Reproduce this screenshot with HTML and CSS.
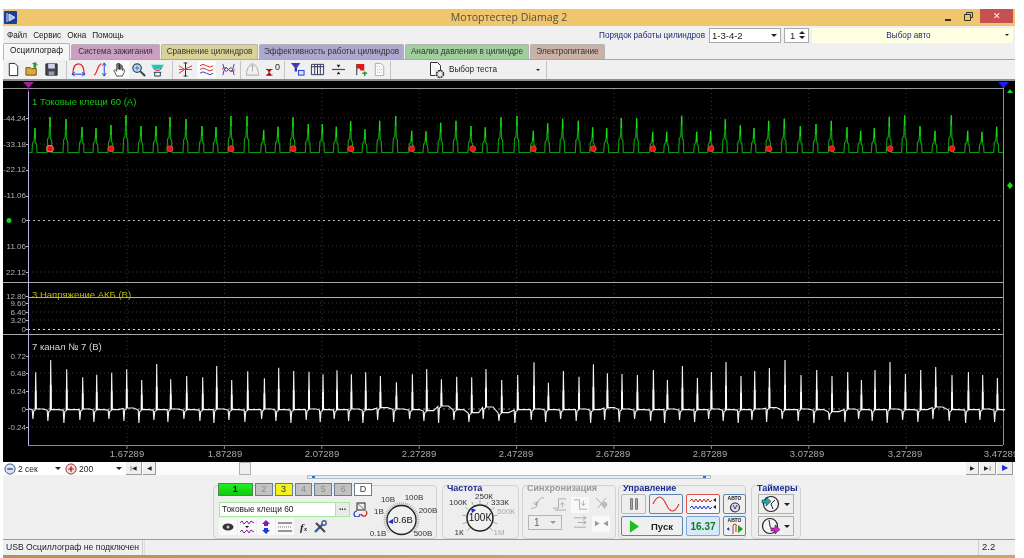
FILE: index.html
```html
<!DOCTYPE html>
<html lang="ru">
<head>
    <meta charset="UTF-8">
    <meta name="viewport" content="width=device-width, initial-scale=1.0">
    <title>Мотортестер Diamag 2</title>
    <link rel="stylesheet" href="styles.css">
</head>
<body>
<div class="window">
    <!-- Title bar -->
    <div class="titlebar">
        <svg class="app-icon" viewBox="0 0 13 13"><rect width="13" height="13" rx="1" fill="#1c3f96"/><path d="M3 2v9M5 3l6 3.5L5 10z" stroke="#dfe9ff" fill="#9cc0f5"/></svg>
        <div class="title">Мотортестер Diamag 2</div>
        <div class="win-min"></div>
        <svg class="win-restore" viewBox="0 0 9 9"><path d="M2.5 2.5V.5h6v5h-2M.5 2.5h6v6h-6z" fill="none" stroke="#333" stroke-width="1"/></svg>
        <div class="win-close">✕</div>
    </div>

    <!-- Menu with cylinder order -->
    <div class="menubar">
        <span class="menu-item">Файл</span>
        <span class="menu-item">Сервис</span>
        <span class="menu-item">Окна</span>
        <span class="menu-item">Помощь</span>
        <span class="order-label">Порядок работы цилиндров</span>
        <div class="select order-select"><span>1-3-4-2</span><i class="arrow"></i></div>
        <div class="select spin-select"><span>1</span><b class="spin"><i class="arrow up"></i><i class="arrow"></i></b></div>
        <div class="auto-select"><span>Выбор авто</span><i class="arrow small"></i></div>
    </div>

    <!-- Tabs -->
    <div class="tabs">
        <div class="tab tab-active">Осциллограф</div>
        <div class="tab tab-ignition">Система зажигания</div>
        <div class="tab tab-compare">Сравнение цилиндров</div>
        <div class="tab tab-power">Эффективность работы цилиндров</div>
        <div class="tab tab-pressure">Анализ давления в цилиндре</div>
        <div class="tab tab-supply">Электропитание</div>
    </div>

    <!-- Toolbar -->
    <div class="toolbar">
        <svg class="tool" viewBox="0 0 16 16"><path d="M3.5 1.5h6l3 3v10h-9z" fill="#fff" stroke="#222"/></svg>
        <svg class="tool" viewBox="0 0 16 16"><path d="M1 6h5l1 1h5v7H1z" fill="#d9a93a" stroke="#6b5210"/><path d="M9 6V2l-2 0 3.5-2L14 3h-2v3z" fill="#2e9a2e"/></svg>
        <svg class="tool" viewBox="0 0 16 16"><path d="M2 2h12v12H2z" fill="#445" stroke="#223"/><path d="M4.5 2h7v5h-7z" fill="#cfd6e8"/><path d="M5 10h6v4H5z" fill="#99a"/></svg>
        <i class="tool-sep sep-a"></i>
        <svg class="tool gap3" viewBox="0 0 16 16"><path d="M2 13C2 5 5 2 8 2s6 3 6 11" fill="none" stroke="#e02020" stroke-width="1.3"/><path d="M1 13h14M1 13l3-2M1 13l3 2M15 13l-3-2M15 13l-3 2" stroke="#1a3fd0" fill="none"/></svg>
        <svg class="tool" viewBox="0 0 16 16"><path d="M1 14C4 14 5 2 9 2" fill="none" stroke="#e02020" stroke-width="1.3"/><path d="M12 1v14M12 1l-2 3M12 1l2 3M12 15l-2-3M12 15l2-3" stroke="#1a3fd0" fill="none"/></svg>
        <div class="tool-on"><svg class="tool" viewBox="0 0 16 16"><path d="M5 15L2 9l1-1 2 2V2h1.5v6V1.5H8V8 2.5h1.5V8 4H11v5l1-2 1 1v3l-2 4z" fill="#fff" stroke="#222" stroke-width=".8"/></svg></div>
        <svg class="tool" viewBox="0 0 16 16"><circle cx="6.5" cy="6.5" r="4.5" fill="#bfe0f5" stroke="#345" stroke-width="1.3"/><path d="M10 10l5 5" stroke="#345" stroke-width="2.2"/><path d="M4 6.5h5M6.5 4v5" stroke="#2a6fc0"/></svg>
        <svg class="tool" viewBox="0 0 16 16"><path d="M1 3h14L11 8H5z" fill="#1fc9b5"/><path d="M3 6l3 3h4l3-3" fill="none" stroke="#d03030"/><path d="M4 11h8M5 15h6M5 11v4M11 11v4" stroke="#235" fill="none"/></svg>
        <i class="tool-sep sep-b"></i>
        <svg class="tool gap2" viewBox="0 0 16 16"><path d="M1 4l6 4 8 0M1 12l6-4 8-4" fill="none" stroke="#d03030"/><path d="M8 1v14M6 1h4M6 15h4" stroke="#222"/><path d="M1 8h14" stroke="#2a9a2a"/></svg>
        <div class="tool-on gap1"><svg class="tool" viewBox="0 0 16 16"><path d="M1 4q3-3 7 0t7 0M1 8q3-3 7 0t7 0" fill="none" stroke="#e02020"/><path d="M1 12q3-3 7 0t7 0" fill="none" stroke="#2040d0"/></svg></div>
        <svg class="tool" viewBox="0 0 16 16"><path d="M2 2q2 12 6 6t6 6M2 14q2-12 6-6t6-6" fill="none" stroke="#2040d0"/><path d="M1 8q3-4 7 0t7 0" fill="none" stroke="#e02020"/></svg>
        <i class="tool-sep sep-c"></i>
        <svg class="tool tool-dim gap1" viewBox="0 0 16 16"><path d="M1.5 14C2 6 5 2 8 2s6 4 6.5 12z" fill="none" stroke="#999"/><path d="M8 3v7M6 5l2-2 2 2" stroke="#999" fill="none"/></svg>
        <svg class="tool" viewBox="0 0 16 16"><path d="M1 8h7M1 14h7M2.5 8l2 3 2-3zM2.5 14l2-3 2 3z" fill="#b01818" stroke="#b01818"/></svg><span class="zero-mark">0</span>
        <i class="tool-sep sep-d"></i>
        <svg class="tool gap1" viewBox="0 0 16 16"><path d="M1 1h10L7.5 6v4H5V6z" fill="#1a3fd0"/><path d="M3 1l3 5 3-5" fill="none" stroke="#e02020"/><rect x="9" y="9" width="6" height="5" fill="#cfe0fa" stroke="#1a3fd0"/></svg>
        <svg class="tool gap2" viewBox="0 0 16 16"><path d="M1.5 2.5h13v11h-13zM1.5 5h13M5 2.5v11M8 2.5v11M11 2.5v11" fill="none" stroke="#30305a"/></svg>
        <svg class="tool gap3" viewBox="0 0 16 16"><path d="M1 8h14" stroke="#7a1fa0" stroke-width="1.3"/><path d="M6 3h4l-2 3zM6 13h4l-2-3z" fill="#222"/></svg>
        <svg class="tool" viewBox="0 0 16 16"><path d="M4 2v12" stroke="#222"/><path d="M4 2h8v7H8l-1-2H4z" fill="#e01818"/><path d="M10 12h5M12.5 10v5" stroke="#1a9a2a" stroke-width="1.4"/></svg>
        <svg class="tool" viewBox="0 0 16 16"><path d="M3.5 1.5h6l3 3v10h-9z" fill="#fafafa" stroke="#aaa"/><path d="M5.5 5h3M5.5 8h5M5.5 11h5" stroke="#bbb" stroke-dasharray="1 1"/></svg>
        <i class="tool-sep sep-e"></i>
        <div class="test-select">
            <svg class="tool-big" viewBox="0 0 18 18"><path d="M2.5 1.5h7l3 3v7M2.5 1.5v13h5" fill="#fff" stroke="#333"/><circle cx="12" cy="13" r="3.5" fill="#ddd" stroke="#333" stroke-width="1.5" stroke-dasharray="2 .8"/><circle cx="12" cy="13" r="1" fill="#fff"/></svg>
            <span>Выбор теста</span>
            <i class="arrow small"></i>
        </div>
        <i class="tool-sep sep-f"></i>
    </div>

    <!-- Oscilloscope -->
    <svg class="scope" id="scope" viewBox="3 81 1012 381">
        <g id="grid"></g>
        <g class="scale">
            <text x="26" y="121">-44.24</text>
            <text x="26" y="147">-33.18</text>
            <text x="26" y="172">-22.12</text>
            <text x="26" y="198">-11.06</text>
            <text x="26" y="223">0</text>
            <text x="26" y="249">11.06</text>
            <text x="26" y="275">22.12</text>
            <text x="26" y="299">12.80</text>
            <text x="26" y="306">9.60</text>
            <text x="26" y="315">6.40</text>
            <text x="26" y="323">3.20</text>
            <text x="26" y="332">0</text>
            <text x="26" y="359">0.72</text>
            <text x="26" y="376">0.48</text>
            <text x="26" y="394">0.24</text>
            <text x="26" y="412">0</text>
            <text x="26" y="430">-0.24</text>
        </g>
        <g class="axis">
            <text x="127" y="457">1.67289</text>
            <text x="225" y="457">1.87289</text>
            <text x="322" y="457">2.07289</text>
            <text x="419" y="457">2.27289</text>
            <text x="516" y="457">2.47289</text>
            <text x="613" y="457">2.67289</text>
            <text x="710" y="457">2.87289</text>
            <text x="807" y="457">3.07289</text>
            <text x="905" y="457">3.27289</text>
            <text x="1001" y="457">3.47289</text>
        </g>
        <g id="traces"></g>
        <text class="ch ch-green" x="32" y="105">1 Токовые клещи 60 (А)</text>
        <text class="ch ch-yellow" x="32" y="298">3 Напряжение АКБ (В)</text>
        <text class="ch ch-white" x="32" y="350">7 канал № 7 (В)</text>
    </svg>

    <!-- Time controls -->
    <div class="timebar">
        <svg class="round-btn" viewBox="0 0 13 13"><circle cx="6.5" cy="6.5" r="5.5" fill="#d8e6f7" stroke="#2b4a80"/><path d="M3.5 6.5h6" stroke="#222" stroke-width="1.2"/></svg>
        <div class="time-select"><span>2 сек</span><i class="arrow"></i></div>
        <svg class="round-btn" viewBox="0 0 13 13"><circle cx="6.5" cy="6.5" r="5.5" fill="#f7dcdc" stroke="#80302b"/><path d="M3.5 6.5h6M6.5 3.5v6" stroke="#a01010" stroke-width="1.3"/></svg>
        <div class="time-select"><span>200</span><i class="arrow"></i></div>
        <div class="step-btn step-wide">|◀</div>
        <div class="step-btn">◀</div>
        <div class="track"><div class="thumb"></div></div>
        <div class="step-btn">▶</div>
        <div class="step-btn step-wide">▶|</div>
        <div class="step-btn step-wide step-blue">▶</div>
    </div>

    <!-- Bottom panels -->
    <div class="bottom">
        <div class="range"><i class="range-mark"></i><i class="range-mark range-end"></i></div>
        <div class="panels">
            <div class="panel panel-channels">
                <div class="ch-col">
                    <div class="ch-btns">
                        <div class="ch-btn ch-btn-first">1</div>
                        <div class="ch-btn">2</div>
                        <div class="ch-btn ch-btn-on">3</div>
                        <div class="ch-btn">4</div>
                        <div class="ch-btn">5</div>
                        <div class="ch-btn">6</div>
                        <div class="ch-btn ch-btn-d">D</div>
                    </div>
                    <div class="ch-input-row">
                        <div class="ch-input"><span>Токовые клещи 60</span><b>...</b></div>
                        <svg class="ch-input-icon" viewBox="0 0 15 15"><rect x="4" y="1" width="8" height="7" fill="#eee" stroke="#222"/><path d="M4 1l8 7" stroke="#777"/><path d="M4 9a3 3 0 1 0 3 3" fill="none" stroke="#1a3fd0" stroke-width="1.2"/><path d="M8 12a3 3 0 1 0 5-3" fill="none" stroke="#d01818" stroke-width="1.2"/></svg>
                    </div>
                    <div class="ch-tools">
                        <div class="ch-tool"><svg viewBox="0 0 14 14"><ellipse cx="7" cy="7" rx="5.5" ry="3.5" fill="#333"/><circle cx="7" cy="7" r="1.5" fill="#ccc"/></svg></div>
                        <div class="ch-tool"><svg viewBox="0 0 14 14"><path d="M0 3l2-2 2 3 3-3 2 3 2-3 3 2M0 12l2-2 2 3 3-3 2 3 2-3 3 2" fill="none" stroke="#8a1fa0"/><path d="M5 6h4l-2 2z" fill="#111"/></svg></div>
                        <div class="ch-tool"><svg viewBox="0 0 14 14"><path d="M7 0l4 4H9v2H5V4H3z" fill="#7a1fb0"/><path d="M7 14l4-4H9V8H5v2H3z" fill="#1a3fd0"/></svg></div>
                        <div class="ch-tool"><svg viewBox="0 0 14 14"><path d="M0 3h14M0 11h14" stroke="#333"/><path d="M0 7h14" stroke="#777" stroke-dasharray="1 1"/></svg></div>
                        <span class="fx">f<small>x</small></span>
                        <svg class="ch-tool-plain" viewBox="0 0 14 14"><path d="M2 12L10 4" stroke="#3a5f9a" stroke-width="2.4"/><path d="M3 3l9 9" stroke="#444" stroke-width="2"/><circle cx="11" cy="3" r="2.2" fill="none" stroke="#3a5f9a" stroke-width="1.4"/></svg>
                    </div>
                </div>
                <svg class="knob" viewBox="372 493 66 46">
                    <g id="knobTicksA"></g>
                    <circle cx="401.5" cy="520" r="14.5" fill="#f0f0f0" stroke="#222" stroke-width="1.3"/>
                    <path d="M388 522l5-3v5z" fill="#1a2fd0"/>
                    <text class="knob-main knob-small" x="403" y="523">0.6В</text>
                    <text x="388" y="502">10В</text>
                    <text x="414" y="500">100В</text>
                    <text x="379" y="514">1В</text>
                    <text x="428" y="513">200В</text>
                    <text x="378" y="536">0.1В</text>
                    <text x="423" y="536">500В</text>
                </svg>
            </div>

            <div class="panel panel-freq">
                <div class="panel-title">Частота</div>
                <svg class="knob" viewBox="442 495 76 44">
                    <g id="knobTicksB"></g>
                    <circle cx="479" cy="519" r="13" fill="#f0f0f0" stroke="#222" stroke-width="1.5"/>
                    <path d="M470 509l5 2-4 3z" fill="#1a2fd0"/>
                    <text class="knob-main" x="479" y="522">100К</text>
                    <text x="483" y="500">250К</text>
                    <text x="457" y="506">100К</text>
                    <text x="499" y="506">333К</text>
                    <text class="knob-off" x="505" y="515">500К</text>
                    <text x="458" y="536">1К</text>
                    <text class="knob-off" x="498" y="536">1М</text>
                </svg>
            </div>

            <div class="panel panel-sync">
                <div class="panel-title title-off">Синхронизация</div>
                <div class="sync-row">
                    <svg class="sync-icon" viewBox="0 0 16 16"><path d="M1 13h3q3 0 4-5t4-6h3M4 8l3-2v4z" fill="none" stroke="#aaa"/></svg>
                    <svg class="sync-icon" viewBox="0 0 16 16"><path d="M1 13h6V3h8M11 12V7M9 9l2-2 2 2M3 15h12" fill="none" stroke="#aaa"/></svg>
                    <div class="sync-on"><svg class="sync-icon" viewBox="0 0 16 16"><path d="M1 3h6v10h8M11 4v5M9 7l2 2 2-2" fill="none" stroke="#aaa"/></svg></div>
                    <svg class="sync-icon" viewBox="0 0 16 16"><path d="M1 2l6 6 4 6M3 13l6-8 3-3" fill="none" stroke="#aaa"/><circle cx="10" cy="9" r="3" fill="#bbb"/></svg>
                </div>
                <div class="sync-row">
                    <div class="sync-select"><span>1</span><i class="arrow off"></i></div>
                    <svg class="sync-icon" viewBox="0 0 16 16"><path d="M1 3h13M5 8h9M1 13h13M11 1l3 2-3 2M11 6l3 2-3 2" fill="none" stroke="#aaa"/></svg>
                    <div class="sync-on"><svg class="sync-icon" viewBox="0 0 16 16"><path d="M1 5l5 3-5 3zM15 5l-5 3 5 3z" fill="#999"/></svg></div>
                </div>
            </div>

            <div class="panel panel-control">
                <div class="panel-title">Управление</div>
                <div class="ctl-grid">
                    <div class="ctl ctl-pause"><i></i><i></i></div>
                    <div class="ctl ctl-blue"><svg viewBox="0 0 30 16"><path d="M2 8q6.5-14 13 0t13 0" fill="none" stroke="#d84040" stroke-width="1.2"/></svg></div>
                    <div class="ctl ctl-red"><svg viewBox="0 0 30 16"><path d="M2 5l2-2 2 3 2-3 2 3 2-3 2 3 2-3 2 3 2-3 2 3 2-2" fill="none" stroke="#d82020"/><path d="M2 12l2-2 2 3 2-3 2 3 2-3 2 3 2-3 2 3 2-3 2 3 2-2" fill="none" stroke="#2030d0"/><path d="M28 2l-3 2 3 2zM28 9l-3 2 3 2z" fill="#223"/></svg></div>
                    <div class="ctl ctl-blue ctl-auto"><span>АВТО</span><svg viewBox="0 0 12 12"><circle cx="6" cy="6.5" r="4.5" fill="#ddd" stroke="#333" stroke-width="1.2"/><path d="M4 4l2 4 2-4" fill="none" stroke="#1a3fd0"/></svg></div>
                    <div class="ctl ctl-blue ctl-start"><svg viewBox="0 0 11 14"><path d="M1 0l10 7-10 7z" fill="#18c018"/></svg><b>Пуск</b></div>
                    <div class="ctl ctl-time">16.37</div>
                    <div class="ctl ctl-blue ctl-auto"><span>АВТО</span><svg viewBox="0 0 18 12"><path d="M1 6h3M7 11V3q0-2 2-2t1 3v5" fill="none" stroke="#c03030"/><path d="M1 6l2-2v4z" fill="#1a3fd0"/><path d="M12 2l5 4-5 4z" fill="#18a018"/></svg></div>
                </div>
            </div>

            <div class="panel panel-timers">
                <div class="panel-title">Таймеры</div>
                <div class="timer-btn"><svg viewBox="0 0 20 18"><circle cx="10" cy="9" r="7.5" fill="#f4f4f4" stroke="#222" stroke-width="1.2"/><path d="M10 9l4-4M10 9l2 5" stroke="#222"/><path d="M1 5h4V2l5 4.5L5 11V8H1z" fill="#28a89a" stroke="#115" stroke-width=".5"/></svg><i class="arrow"></i></div>
                <div class="timer-btn"><svg viewBox="0 0 20 18"><circle cx="9" cy="9" r="7.5" fill="#f4f4f4" stroke="#222" stroke-width="1.2"/><path d="M9 9l-1-6M9 9l2 4" stroke="#222"/><path d="M10 11h4V8l5 4.5L14 17v-3h-4z" fill="#e020c0" stroke="#115" stroke-width=".5"/></svg><i class="arrow"></i></div>
            </div>
        </div>
    </div>

    <!-- Status bar -->
    <div class="statusbar">
        <div class="status-main">USB Осциллограф не подключен</div>
        <div class="status-fill"></div>
        <div class="status-ver">2.2</div>
    </div>
</div>
<div class="desktop-strip"></div>
<script src="script.js"></script>
</body>
</html>
```

FILE: styles.css
```css
body {
    margin: 0;
    background: #fff;
    font-family: "Liberation Sans", Arial, sans-serif;
    font-size: 8.2px;
    color: #222;
    overflow: hidden;
    white-space: nowrap;
}
.window {
    margin: 9px 0 0 3px;
    width: 1012px;
    height: 546px;
    background: #f0f0f0;
    display: flex;
    flex-direction: column;
    filter: blur(0.35px);
}
.desktop-strip {
    margin-left: 3px;
    width: 1012px;
    height: 3px;
    background: linear-gradient(90deg, #b5914f, #c4a66a 55%, #c9a95e);
}
.arrow {
    display: inline-block;
    width: 0;
    height: 0;
    border-left: 3px solid transparent;
    border-right: 3px solid transparent;
    border-top: 3px solid #222;
}
.arrow.small { border-width: 2.5px 2.5px 0; }
.arrow.up { border-top: 0; border-bottom: 3px solid #222; }
.arrow.off { border-top-color: #999; }

/* title bar */
.titlebar {
    height: 17px;
    flex: none;
    background: #efc66c;
    display: flex;
    align-items: flex-start;
}
.app-icon { width: 13px; height: 13px; margin: 2px 0 0 1px; }
.title {
    flex: 1;
    text-align: center;
    font-family: "Open Sans", sans-serif;
    font-size: 10.6px;
    line-height: 17px;
    color: #55503f;
    padding-left: 56px;
}
.win-min { width: 6px; height: 2px; background: #333; margin: 10px 13px 0 0; }
.win-restore { width: 9px; height: 9px; margin: 3px 7px 0 0; }
.win-close {
    width: 33px;
    height: 14px;
    margin-right: 2px;
    background: #c75050;
    color: #fff;
    text-align: center;
    font-size: 9px;
    line-height: 14px;
}

/* menu */
.menubar {
    height: 18px;
    flex: none;
    display: flex;
    align-items: center;
    padding-left: 4px;
}
.menu-item { margin-right: 6px; }
.order-label { margin-left: auto; margin-right: 4px; color: #1f2a78; }
.select {
    height: 15px;
    box-sizing: border-box;
    background: #fff;
    border: 1px solid #a9a9a9;
    display: flex;
    align-items: center;
    justify-content: space-between;
    padding: 0 3px 0 2px;
    font-size: 9.5px;
}
.order-select { width: 72px; margin-right: 3px; }
.spin-select { width: 25px; margin-right: 3px; padding-left: 5px; }
.spin { display: flex; flex-direction: column; gap: 2px; }
.auto-select {
    width: 201px;
    height: 15px;
    margin-right: 2px;
    background: #ffffe3;
    border-radius: 2px;
    display: flex;
    align-items: center;
    padding-right: 4px;
    box-sizing: border-box;
    color: #1f2a78;
}
.auto-select span { flex: 1; text-align: center; }

/* tabs */
.tabs {
    height: 16px;
    flex: none;
    display: flex;
    border-bottom: 1px solid #a8a8a8;
    box-sizing: border-box;
    align-items: flex-end;
}
.tab {
    height: 15px;
    box-sizing: border-box;
    line-height: 14px;
    text-align: center;
    border: 1px solid #b5b5b5;
    border-bottom: 0;
    border-radius: 2px 2px 0 0;
    margin-right: 1px;
    color: #333;
}
.tab-active { width: 67px; height: 17px; background: #f6f6f6; margin-bottom: -1px; color: #111; margin-right: 1px; }
.tab-ignition { width: 89px; background: #cb9ec3; }
.tab-compare { width: 97px; background: #d8d296; }
.tab-power { width: 145px; background: #ada8cf; }
.tab-pressure { width: 124px; background: #a0cf9d; }
.tab-supply { width: 75px; background: #cbb1a6; }

/* toolbar */
.toolbar {
    height: 21px;
    flex: none;
    box-sizing: border-box;
    border-bottom: 2px solid #8f8f8f;
    display: flex;
    align-items: center;
    padding-left: 1px;
}
.tool { width: 15px; height: 15px; margin: 0 2px; flex: none; display: block; }
.tool.gap1, .tool-on.gap1 { margin-right: 3px; }
.tool.gap2 { margin-right: 4px; }
.tool.gap3 { margin-right: 5px; }
.tool-dim { opacity: .8; }
.tool-on { background: #fafafa; padding: 1px 0; }
.tool-sep { width: 1px; height: 18px; background: #c4c4c4; flex: none; }
.sep-a { margin: 0 2px 0 5px; }
.sep-b { margin: 0 3px 0 5px; }
.sep-c { margin: 0 2px 0 2px; }
.sep-d { margin: 0 3px 0 2px; }
.sep-e { margin: 0 0 0 1px; }
.zero-mark { font-size: 9px; margin: -5px 2px 0 -7px; }
.test-select {
    width: 155px;
    display: flex;
    align-items: center;
    padding-left: 37px;
    box-sizing: border-box;
}
.tool-big { width: 18px; height: 18px; margin-right: 3px; }
.test-select span { flex: 1; }
.test-select .arrow { margin-right: 6px; }

/* scope */
.scope {
    width: 1012px;
    height: 381px;
    flex: none;
    display: block;
    background: #000;
}
.scale text { font-size: 8px; fill: #b4b4b4; text-anchor: end; }
.axis text { font-size: 9.5px; fill: #a8a8a8; text-anchor: middle; }
.ch { font-size: 9.5px; }
.ch-green { fill: #12c812; }
.ch-yellow { fill: #b9b900; }
.ch-white { fill: #d8d8d8; }

/* time row */
.timebar {
    height: 13px;
    flex: none;
    display: flex;
    align-items: center;
    background: #fff;
    font-size: 8.5px;
}
.round-btn { width: 12px; height: 12px; margin-left: 1px; flex: none; }
.time-select {
    width: 47px;
    margin-left: 2px;
    display: flex;
    align-items: center;
    justify-content: space-between;
    padding-right: 4px;
    box-sizing: border-box;
}
.time-select + .round-btn { margin-left: 0; }
.step-btn {
    width: 13px;
    height: 13px;
    box-sizing: border-box;
    background: #efefef;
    border-right: 1px solid #999;
    border-bottom: 1px solid #999;
    text-align: center;
    font-size: 6px;
    line-height: 12px;
    color: #222;
    flex: none;
    margin-right: 1px;
}
.step-wide { width: 16px; }
.step-blue { color: #1a2fe0; font-size: 8px; margin-right: 2px; }
.track { flex: 1; height: 13px; background: #fbfbfb; margin-left: -1px; padding-left: 83px; }
.thumb {
    width: 12px;
    height: 13px;
    box-sizing: border-box;
    background: #eee;
    border: 1px solid #b0b0b0;
}

/* bottom */
.bottom {
    height: 65px;
    flex: none;
    box-sizing: border-box;
    border-bottom: 1px solid #9a9a9a;
    overflow: hidden;
}
.range {
    width: 404px;
    height: 4px;
    box-sizing: border-box;
    margin-left: 304px;
    background: #e8eef8;
    border: 1px solid #b0bccc;
    display: flex;
    justify-content: space-between;
    padding: 0 4px;
}
.range-mark { width: 3px; height: 2px; background: #2a6ee0; }
.panels {
    display: flex;
    align-items: flex-start;
    margin: 6px 0 0 210px;
}
.panel {
    height: 54px;
    box-sizing: border-box;
    border: 1px solid #d2d2d2;
    border-radius: 4px;
    background: #eeeeee;
    margin-right: 4px;
}
.panel-title {
    font-size: 9px;
    font-weight: bold;
    color: #1b2a90;
    line-height: 8px;
    padding-left: 4px;
    margin: -2px 0 2px;
}
.title-off { color: #9a9a9a; }
.panel-channels { width: 224px; margin-right: 5px; display: flex; }
.panel-freq { width: 77px; margin-right: 3px; }
.panel-sync { width: 94px; margin-right: 2px; }
.panel-control { width: 128px; margin-right: 5px; }
.panel-timers { width: 50px; }
.panel-control .panel-title { padding-left: 4px; }
.panel-timers .panel-title { padding-left: 5px; }

/* channels */
.ch-col { width: 158px; padding-left: 4px; box-sizing: border-box; flex: none; }
.ch-btns { display: flex; gap: 2px; margin-top: -3px; height: 13px; }
.ch-btn {
    width: 18px;
    height: 13px;
    box-sizing: border-box;
    background: #c2c2c2;
    border: 1px solid #5f7f9f;
    color: #8c8c8c;
    text-align: center;
    line-height: 11px;
    font-size: 9px;
}
.ch-btn-first { width: 35px; background: linear-gradient(#22f022, #10c810); color: #111; border-color: #4a8a4a; font-weight: bold; }
.ch-btn-on { background: #f2f21a; color: #333; }
.ch-btn-d { background: #fff; color: #333; }
.ch-input-row { display: flex; align-items: center; margin: 6px 0 1px 1px; }
.ch-input {
    width: 131px;
    height: 15px;
    box-sizing: border-box;
    background: #fff;
    border: 1px solid #a6eb9c;
    display: flex;
    justify-content: space-between;
    padding-left: 2px;
    font-size: 8.4px;
    line-height: 13px;
}
.ch-input b {
    width: 13px;
    background: #eaeaea;
    border-left: 1px solid #ccc;
    text-align: center;
    line-height: 9px;
}
.ch-input-icon { width: 15px; height: 15px; margin-left: 3px; }
.ch-tools { display: flex; align-items: center; margin-left: 1px; }
.ch-tool { width: 18px; height: 17px; background: #f8f8f8; margin-right: 1px; display: flex; align-items: center; justify-content: center; }
.ch-tool svg { width: 14px; height: 14px; }
.fx { font-family: "Liberation Serif", serif; font-weight: bold; font-style: italic; font-size: 11px; margin: 0 6px 0 5px; }
.fx small { font-size: 7px; }
.ch-tool-plain { width: 14px; height: 14px; }

/* knobs */
.knob { display: block; overflow: visible; }
.panel-channels .knob { width: 66px; height: 46px; margin-top: 7px; }
.panel-freq .knob { width: 76px; height: 44px; }
.knob text { font-size: 8px; fill: #333; text-anchor: middle; }
.knob .knob-main { font-size: 10px; fill: #111; }
.knob .knob-small { font-size: 9.5px; }
.knob .knob-off { fill: #aaa; }

/* sync */
.sync-row { display: flex; align-items: center; padding-left: 5px; height: 19px; margin-top: 1px; gap: 3.5px; }
.sync-row + .sync-row { margin-top: 0; }
.sync-on { background: #f8f8f8; height: 16px; margin-top: 2px; }
.sync-icon { width: 15px; height: 15px; margin: 0 1px 0 2px; display: block; flex: none; }
.sync-select {
    width: 34px;
    height: 15px;
    flex: none;
    box-sizing: border-box;
    margin-right: 5px;
    border: 1px solid #b5b5b5;
    display: flex;
    justify-content: space-between;
    align-items: center;
    padding: 0 5px;
    font-size: 10px;
    color: #666;
}

/* control buttons */
.ctl-grid {
    display: grid;
    grid-template-columns: 25px 34px 34px 23px;
    grid-template-rows: 20px 20px;
    column-gap: 3px;
    row-gap: 2px;
    margin: 1px 0 0 2px;
}
.ctl {
    box-sizing: border-box;
    background: #efefef;
    border: 1px solid #b8b8b8;
    border-radius: 2px;
    display: flex;
    align-items: center;
    justify-content: center;
}
.ctl svg { width: 30px; height: 16px; }
.ctl-blue { border-color: #5c86b0; }
.ctl-red { border-color: #e05050; background: #f8f8f8; }
.ctl-pause { gap: 2px; }
.ctl-pause i { width: 3px; height: 12px; background: #aaa; border: 1px solid #777; box-sizing: border-box; border-radius: 1px; }
.ctl-auto { flex-direction: column; font-size: 5px; line-height: 5px; font-weight: bold; }
.ctl-auto svg { width: 18px; height: 12px; }
.ctl-start { grid-column: span 2; justify-content: flex-start; padding-left: 7px; }
.ctl-start svg { width: 10px; height: 15px; }
.ctl-start b { font-size: 9.5px; margin-left: 12px; }
.ctl-time {
    background: #d9e8f8;
    border-color: #7aa8d8;
    color: #0d7a1d;
    font-weight: bold;
    font-size: 10px;
}

/* timers */
.timer-btn {
    width: 36px;
    height: 20px;
    box-sizing: border-box;
    margin: 1px 0 2px 6px;
    background: #efefef;
    border: 1px solid #b0b0b0;
    display: flex;
    align-items: center;
    gap: 3px;
    padding-left: 2px;
}
.timer-btn svg { width: 20px; height: 18px; }

/* status bar */
.statusbar {
    height: 15px;
    flex: none;
    display: flex;
    line-height: 14px;
    font-size: 8.6px;
}
.status-main { width: 140px; padding-left: 3px; box-sizing: border-box; border-right: 1px solid #ccc; }
.status-fill { flex: 1; border-right: 1px solid #ccc; margin-left: 1px; border-left: 1px solid #ddd; }
.status-ver { width: 36px; padding-left: 3px; box-sizing: border-box; font-size: 9.5px; }
```

FILE: script.js
```js
// Peak x positions and tops read off the recording
const xs = [35,50,66,82,96,111,126,141,156,170,186,202,216,231,247,
    263.7,278,293,308.3,322.3,336.3,350.7,365,379.7,395.7,411.7,426,440.7,456,471,485.3,501,517,533.3,547.7,562.7,578.3,592.7,606.7,621.3,
    636.7,652.7,666.7,681.7,696.7,710.7,725.3,740.3,754,768.7,784.3,800.3,816,831.3,847,860.7,874.3,889.3,904.7,920,935,951.3,967.7,982,996.7];
const greenTops = [128,117,119,127,128,125,115,126,126,117,119,126,127,116,116,
    130,126.7,117.3,124,124,126.7,121.3,129.3,120.7,116,130.7,131.3,122.7,120.7,126,127.3,117.3,116,130.7,123.3,118.7,120.7,127.3,128,118,
    118.3,131.7,131.7,115.7,131.7,130.7,119.3,125.3,128,120.7,118.7,126,124,120.7,127.3,130.7,128,116.7,115.3,126,130.7,115.3,130.7,131.7,126.7];
const whiteTops = [372.3,360,369.3,377.3,374.7,372.7,369.3,380,364,379.3,376,377.3,366,380,371.3,
    378.3,367.7,371,371.7,374.3,370.3,374.3,372.3,376,382.3,374.3,369,379.3,376.7,377.3,369,380,375,362.3,382.7,371,376.7,364.3,373.3,374,
    375,370,380,366,378,372,362,376,371,368,360,375,370,376,372,380,370,362,374,370,367,375,372,375,378];
const markers = [111,170,231,293,351,411.7,472.7,533.3,593.3,652.7,711,769,831.7,890,952];

const svgNS = "http://www.w3.org/2000/svg";
function add(parent, tag, attrs) {
    const el = document.createElementNS(svgNS, tag);
    for (const k in attrs) el.setAttribute(k, attrs[k]);
    parent.appendChild(el);
    return el;
}

// Grid
const grid = document.getElementById("grid");
const dotted = { stroke: "#3d3d2c", "stroke-dasharray": "1 3" };
[118,144,170,196,246,272,303,312,320,356,373,391,427].forEach(y => {
    add(grid, "line", Object.assign({ x1: 28, x2: 1003, y1: y, y2: y }, dotted));
});
for (let x = 127; x < 1000; x += 97.4) {
    add(grid, "line", Object.assign({ x1: x, x2: x, y1: 89, y2: 445 }, dotted));
}
const sep = (x1, x2, y, color) => add(grid, "line", { x1, x2, y1: y, y2: y, stroke: color });
sep(3, 1003, 88.5, "#9a9a9a");
sep(3, 1003, 282.5, "#a8a8a8");
sep(3, 1003, 334.5, "#a8a8a8");
sep(28, 1003, 445.5, "#8a8a8a");
add(grid, "line", { x1: 28, x2: 1003, y1: 220.5, y2: 220.5, stroke: "#bbb", "stroke-dasharray": "2 3" });
add(grid, "line", { x1: 28, x2: 1003, y1: 329.5, y2: 329.5, stroke: "#ddd", "stroke-dasharray": "2 3" });
add(grid, "line", { x1: 28, x2: 1003, y1: 409, y2: 409, stroke: "#888", "stroke-dasharray": "2 3" });
[118,144,170,196,220,246,272,296,303,312,320,329,356,373,391,409,427].forEach(y => sep(26, 28, y + .5, "#bbb"));
for (let x = 127; x < 1000; x += 97.4) add(grid, "line", { x1: x, x2: x, y1: 445, y2: 449, stroke: "#888" });

// Cursors and markers on the canvas edge
add(grid, "line", { x1: 28.5, x2: 28.5, y1: 85, y2: 445, stroke: "#b9b5e8" });
add(grid, "line", { x1: 28.5, x2: 28.5, y1: 85, y2: 92, stroke: "#a020a0" });
add(grid, "line", { x1: 1003.5, x2: 1003.5, y1: 85, y2: 445, stroke: "#7f86f0" });
add(grid, "path", { d: "M23 82h11l-5.5 6z", fill: "#a020a0" });
add(grid, "path", { d: "M998 82h11l-5.5 6z", fill: "#1a20f0" });
add(grid, "path", { d: "M1007 93l3-4 3 4z", fill: "#18e018" });
add(grid, "path", { d: "M1010 182l3 3.5-3 3.5-3-3.5z", fill: "#18e018" });
add(grid, "circle", { cx: 9, cy: 220.5, r: 2.5, fill: "#18d018" });

// Green current trace
const traces = document.getElementById("traces");
const base = 152.5;
let green = `M29 ${base}`;
let bright = "";
xs.forEach((x, i) => {
    const top = greenTops[i];
    const knee = top + (base - top) * 0.62;
    green += ` L${x - 3} ${base} L${x - 2.4} ${knee} L${x - 1} ${knee - 2} L${x} ${top} L${x + .6} ${knee} L${x + 1.6} ${knee + 1} L${x + 2} ${base}`;
    bright += `M${x} ${top}V${top + 10}`;
});
green += ` L1003 ${base}`;
add(traces, "path", { d: green, fill: "none", stroke: "#0b9a0b", "stroke-width": 1.2 });
add(traces, "path", { d: bright, fill: "none", stroke: "#18e818", "stroke-width": 1.1 });

// Battery line
add(traces, "line", { x1: 28, x2: 1003, y1: 297.5, y2: 297.5, stroke: "#c8c800" });

// White channel with small level shifts between sparks
const shifts = { 23: -2, 26: 1, 27: -3, 29: 3, 30: -2, 31: 3, 6: -1, 38: -2, 49: -2, 53: 2, 60: -2 };
let white = "M29 409";
let thick = "";
xs.forEach((x, i) => {
    const sx = x + .7;
    const level = 409 + (shifts[i] || 0) + (i % 3 ? .6 : 0);
    const low = 419 + (i * 7 % 5);
    white += ` L${sx - 3.5} ${level + .5} L${sx - 2.8} ${low} L${sx - 2} ${level + 2} L${sx - .5} ${level + 1} L${sx} ${whiteTops[i]} L${sx + .6} ${level} L${sx + 7} ${level}`;
    thick += `M${sx} ${level}V${(level + whiteTops[i]) / 2}`;
});
white += " L1003 411";
add(traces, "path", { d: white, fill: "none", stroke: "#f2f2f2", "stroke-width": 1.1 });
add(traces, "path", { d: thick, fill: "none", stroke: "#fff", "stroke-width": 1.6 });

// Spark markers
add(traces, "circle", { cx: 50, cy: 148.7, r: 3.4, fill: "#f01010", stroke: "#e8b0a0", "stroke-width": .8 });
markers.forEach(x => {
    add(traces, "circle", { cx: x, cy: 148.7, r: 3, fill: "#f01010", stroke: "#f06060", "stroke-width": .6 });
});

// Knob graduations
function ticks(id, cx, cy, r1, r2, from, to, count, color) {
    const g = document.getElementById(id);
    for (let i = 0; i <= count; i++) {
        const a = (from + (to - from) * i / count) * Math.PI / 180;
        add(g, "line", {
            x1: cx + r1 * Math.cos(a), y1: cy + r1 * Math.sin(a),
            x2: cx + r2 * Math.cos(a), y2: cy + r2 * Math.sin(a),
            stroke: color, "stroke-width": .7
        });
    }
}
ticks("knobTicksA", 401.5, 520, 15, 18, 135, 405, 40, "#999");
ticks("knobTicksB", 479, 519, 14, 18, 135, 405, 10, "#888");
```
